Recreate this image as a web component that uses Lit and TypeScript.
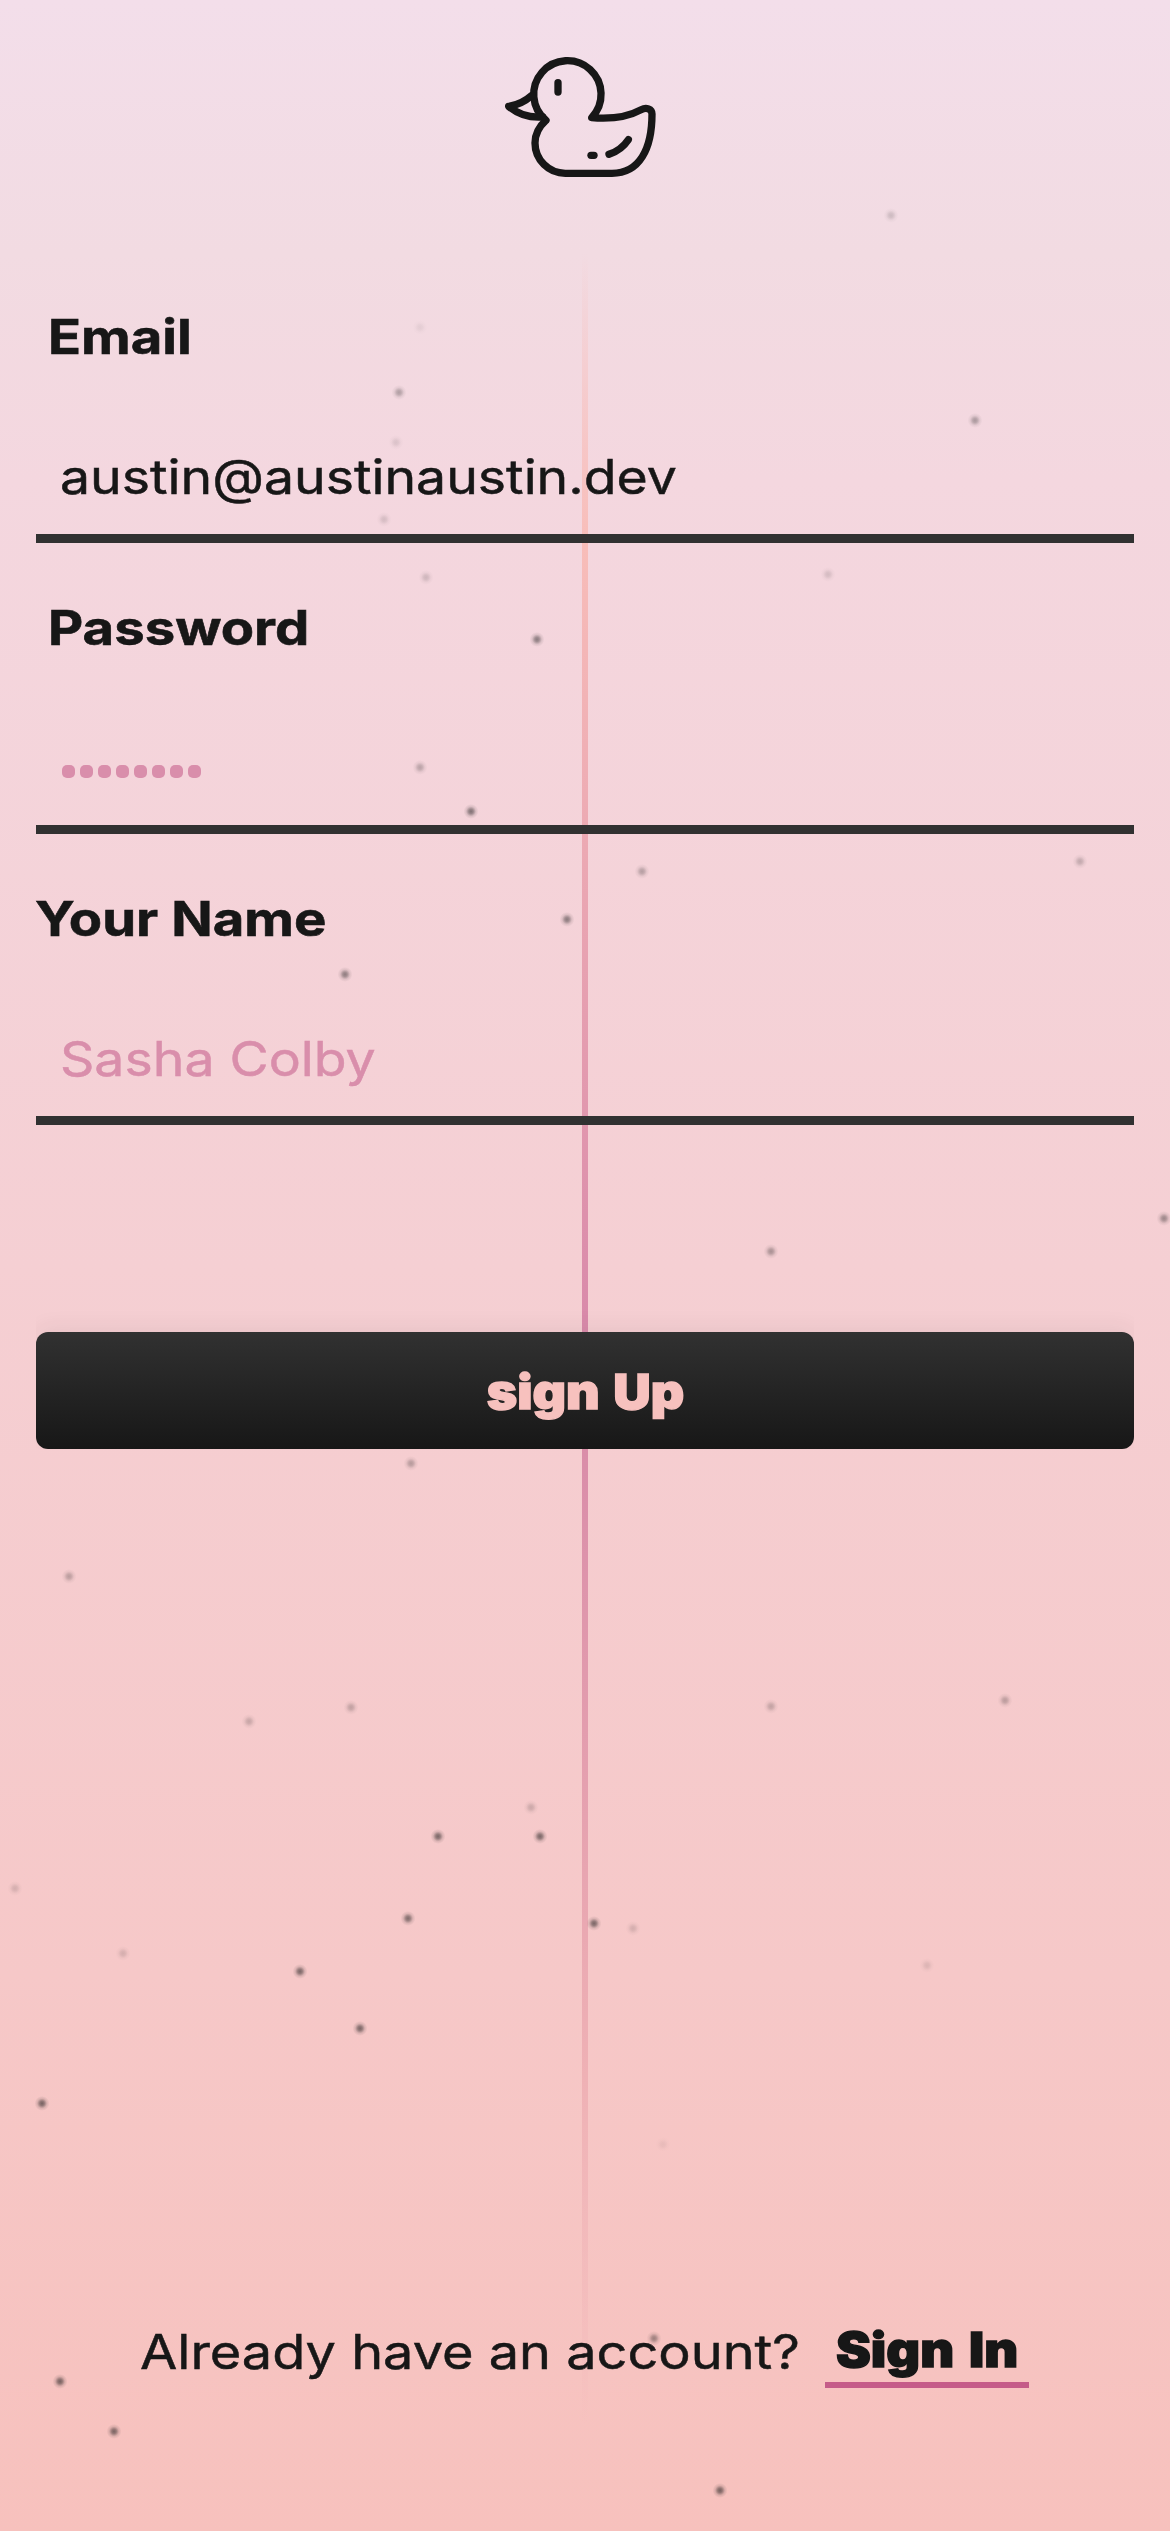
import { LitElement, html, css, svg } from "lit";
import { customElement, property } from "lit/decorators.js";

type Speck = [x: number, y: number, opacity: number];

const SPECKS: Speck[] = [
  [891, 215, 0.18], [975, 420, 0.35], [420, 327, 0.07], [399, 392, 0.32],
  [396, 442, 0.12], [384, 519, 0.15], [426, 577, 0.18], [828, 574, 0.15],
  [537, 639, 0.5], [420, 767, 0.28], [471, 811, 0.55], [642, 871, 0.3],
  [1080, 861, 0.24], [567, 919, 0.5], [345, 974, 0.48], [1164, 1218, 0.42],
  [771, 1251, 0.36], [411, 1463, 0.3], [69, 1576, 0.28], [249, 1721, 0.22],
  [351, 1707, 0.25], [771, 1706, 0.24], [1005, 1700, 0.28], [531, 1807, 0.2],
  [438, 1836, 0.58], [540, 1836, 0.58], [15, 1888, 0.16], [408, 1918, 0.55],
  [594, 1923, 0.58], [633, 1928, 0.16], [123, 1953, 0.16], [300, 1971, 0.58],
  [927, 1965, 0.12], [360, 2028, 0.58], [42, 2103, 0.6], [663, 2144, 0.07],
  [654, 2338, 0.42], [60, 2381, 0.6], [114, 2431, 0.58], [720, 2490, 0.6],
];

@customElement("speck-field")
export class SpeckField extends LitElement {
  static styles = css`
    :host { display: block; position: absolute; inset: 0; overflow: hidden; }
    .canvas { display: block; width: 100%; height: 100%; }
  `;
  render() {
    return html`<svg class="canvas" viewBox="0 0 1170 2531" aria-hidden="true">
      <defs>
        <radialGradient id="speck">
          <stop offset="0" stop-color="#171717" />
          <stop offset="0.3" stop-color="#171717" stop-opacity="0.78" />
          <stop offset="0.65" stop-color="#171717" stop-opacity="0.22" />
          <stop offset="1" stop-color="#171717" stop-opacity="0" />
        </radialGradient>
      </defs>
      ${SPECKS.map(([x, y, o]) => svg`<circle cx=${x} cy=${y + 0.4} r="7.5" fill="url(#speck)" opacity=${o * 0.95} />`)}
    </svg>`;
  }
}

@customElement("duck-logo")
export class DuckLogo extends LitElement {
  static styles = css`
    :host { display: block; width: 180px; height: 150px; }
    .duck { display: block; width: 100%; height: 100%; fill: none; stroke: #171717; stroke-width: 22; stroke-linecap: round; stroke-linejoin: round; }
  `;
  render() {
    return html`<svg class="duck" viewBox="0 0 540 450" aria-hidden="true">
      <path d="M305 233 A101 101 0 1 0 168 241 C146 261 135 284 135 309 C135 359 176 400 226 400 H366 C449 400 486 326 486 222 C486 206 468 201 454 209 C410 233 362 238 305 233 Z" />
      <path d="M126 166 C108 182 82 196 56 199 C82 221 120 234 158 231" />
      <path d="M204 128 V156" />
      <path d="M303 346 H312" />
      <path d="M357 343 C383 334 401 320 415 299" />
    </svg>`;
  }
}

@customElement("form-field")
export class FormField extends LitElement {
  @property() label = "";
  @property() kind = "";
  @property() value = "";
  @property() placeholder = "";

  static styles = css`
    :host { display: block; height: 291px; box-sizing: border-box; border-bottom: 9px solid #313131; }
    .label, .control { display: flex; align-items: center; white-space: nowrap; color: #171717; font-size: 48px; line-height: 60px; }
    .label { height: 60px; padding: 55px 0 0 12px; font-weight: 700; }
    .label.name { padding-left: 0; }
    .label.name .text { margin-left: -1px; }
    .control { height: 60px; padding: 80px 24px 0; font-weight: 400; }
    .text { display: block; transform-origin: 0 50%; }
    .label .text { transform: scaleX(1.134); -webkit-text-stroke: 0.6px currentColor; }
    .control .text { transform: scaleX(1.116); -webkit-text-stroke: 0.5px currentColor; }
    .hint { color: #d98eab; }
    .dots { display: flex; gap: 5px; padding: 6px 0 0 2px; }
    .dot { width: 13px; height: 13px; border-radius: 5px; background: #d98eab; }
  `;
  render() {
    return html`
      <div class="label ${this.kind}"><span class="text">${this.label}</span></div>
      <div class="control">
        ${this.kind === "password"
          ? html`<div class="dots">${Array.from({ length: 8 }, () => html`<i class="dot"></i>`)}</div>`
          : html`<span class="text ${this.value ? "" : "hint"}">${this.value || this.placeholder}</span>`}
      </div>`;
  }
}

@customElement("app-root")
export class AppRoot extends LitElement {
  static styles = css`
    :host { display: block; font-family: Inter, "Liberation Sans", sans-serif; color: #171717; }
    .page { position: relative; box-sizing: border-box; width: 1170px; height: 2531px; overflow: hidden; display: flex; flex-direction: column; background: linear-gradient(180deg, #f3deea 0%, #f2dbe2 10%, #f4d7df 19%, #f5cfd3 50%, #f6c8c8 78%, #f7c1bd 100%); }
    .seam { position: absolute; left: 582px; top: 253px; width: 6px; height: 2172px; background: linear-gradient(180deg, rgba(248,189,185,0) 0%, #f8bdb9 13.5%, #d98aaa 49%, #da8ea9 56%, #efb1b5 84%, rgba(247,193,191,0) 100%); }
    .header { position: relative; height: 252px; box-sizing: border-box; padding: 40px 0 0 490px; }
    .form { position: relative; display: flex; flex-direction: column; padding: 0 36px; }
    .submit { display: flex; align-items: center; justify-content: center; height: 117px; margin: 207px 0 0; padding: 0; border: 0; border-radius: 12px; background: linear-gradient(180deg, #313131, #171717); box-shadow: 0 -6px 20px rgba(49,49,49,0.06); clip-path: inset(-30px 0 0 0); color: #f7c1be; font: 900 48px Inter, sans-serif; }
    .submit-text { display: block; padding-top: 2px; transform: scaleX(1.08); word-spacing: 3px; -webkit-text-stroke: 1.4px #f7c1be; }
    .footer { position: relative; display: flex; align-items: flex-start; margin-top: auto; height: 213px; padding-left: 140px; font-size: 48px; line-height: 60px; white-space: nowrap; }
    .question { width: 685px; padding-top: 4px; font-weight: 400; }
    .question-text { display: inline-block; transform-origin: 0 50%; transform: scaleX(1.126); -webkit-text-stroke: 0.5px currentColor; }
    .link { width: 204px; height: 70px; box-sizing: border-box; border-bottom: 6px solid #c55c89; padding: 2px 0 0 11px; font-weight: 900; color: #171717; }
    .link-text { display: inline-block; transform-origin: 0 50%; transform: scaleX(1.09); word-spacing: 4px; -webkit-text-stroke: 1.4px #171717; }
  `;
  render() {
    return html`<main class="page">
      <div class="seam"></div>
      <speck-field></speck-field>
      <header class="header"><duck-logo></duck-logo></header>
      <section class="form">
        <form-field kind="email" label="Email" value="austin@austinaustin.dev"></form-field>
        <form-field kind="password" label="Password"></form-field>
        <form-field kind="name" label="Your Name" placeholder="Sasha Colby"></form-field>
        <button class="submit"><span class="submit-text">sign Up</span></button>
      </section>
      <footer class="footer">
        <div class="question"><span class="question-text">Already have an account?</span></div>
        <a class="link"><span class="link-text">Sign In</span></a>
      </footer>
    </main>`;
  }
}
